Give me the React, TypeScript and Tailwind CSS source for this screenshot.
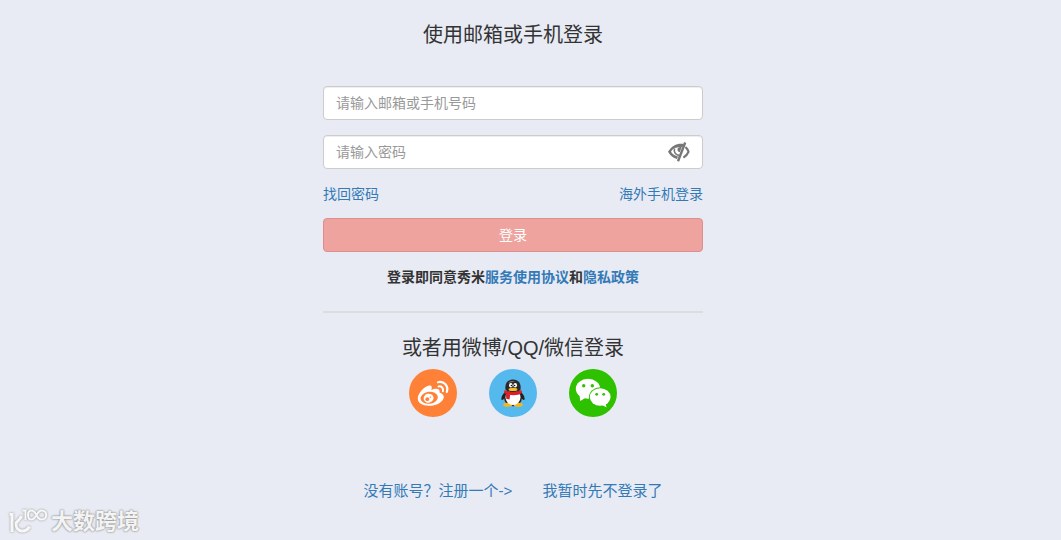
import { useState } from "react";

const linkClass = "text-[#337ab7] hover:underline";
const inputClass =
  "block h-[34px] w-full rounded border border-[#cccccc] bg-white px-3 text-sm text-[#555555] shadow-[inset_0_1px_1px_rgba(0,0,0,0.075)] outline-none placeholder:text-[#999999]";

function EyeOffIcon() {
  return (
    <svg width="22" height="20" viewBox="0 0 22 20" fill="none" stroke="#777777" aria-hidden="true">
      <path d="M16 2C10 .8 4 3 0 9.800 2.500 13.800 5 16 9 17L10 14.600C6.800 13.800 4.600 12.300 3 9.800 3.600 8.800 4.300 7.900 5.200 7.100 7 5.500 11 5 14.500 5Z" fill="#777777" stroke="none" />
      <path d="M6.500 6.500C5.600 10 7.500 13 11 13.400" strokeWidth="1.600" />
      <path d="M9.800 6C9 8.500 9.800 10 11.800 10.200L14 4Z" fill="#777777" stroke="none" />
      <path d="M17.200 .5 10 19.200" strokeWidth="2.400" />
      <path d="M17.500 5C19 6.300 19.900 7.800 20.500 9.800 19.500 12.300 17.900 14 15.400 15.600" strokeWidth="2.200" />
    </svg>
  );
}

function WeiboIcon() {
  return (
    <svg className="size-12" viewBox="0 0 48 48" aria-hidden="true">
      <circle cx="24" cy="24" r="24" fill="#ff8138" />
      <path d="M8.800 29.500C8.800 24.500 15 17.500 20 16.500 23 16 23.200 18.500 22.300 21 26 19.300 31.500 18.800 30.600 23.400 35.200 25 35.800 28.200 33.500 31.200 30.500 35 25.500 36.700 20 36.700 13 36.700 8.800 33.800 8.800 29.500Z" fill="#fff" />
      <ellipse cx="20.200" cy="28.800" rx="8.700" ry="6" fill="#ff8138" transform="rotate(-8 20.200 28.800)" />
      <ellipse cx="19.600" cy="29.200" rx="5" ry="4.500" fill="#fff" transform="rotate(-15 19.600 29.200)" />
      <circle cx="18.300" cy="30.200" r="1.900" fill="#ff8138" />
      <circle cx="21.300" cy="28.300" r=".7" fill="#ff8138" />
      <path d="M29.500 17.500C32.500 16.800 34.800 19.200 33.900 22.200" fill="none" stroke="#fff" strokeWidth="2" strokeLinecap="round" />
      <path d="M29 13.200C35 11.800 39.800 17 37.800 23" fill="none" stroke="#fff" strokeWidth="2.200" strokeLinecap="round" />
    </svg>
  );
}

function QQIcon() {
  return (
    <svg className="size-12" viewBox="0 0 48 48" aria-hidden="true">
      <circle cx="24" cy="24" r="24" fill="#56b9ee" />
      <path d="M17 22C13.500 25 12 28 12.500 30.500 13 32.200 15 30 16 28.500ZM31 22C34.500 25 36 28 35.500 30.500 35 32.200 33 30 32 28.500Z" fill="#222" />
      <ellipse cx="24" cy="28.500" rx="9" ry="8.800" fill="#222" />
      <ellipse cx="18.800" cy="35.800" rx="4.600" ry="2" fill="#f7b51c" />
      <ellipse cx="29.200" cy="35.800" rx="4.600" ry="2" fill="#f7b51c" />
      <ellipse cx="24" cy="28.500" rx="7.500" ry="7.400" fill="#fff" />
      <path d="M16.500 20.500C15.500 14 19 10.500 24 10.500S32.500 14 31.500 20.500C30 24 18 24 16.500 20.500Z" fill="#292929" />
      <path d="M19.500 14C20.500 12 23 11.800 26 12.200 24 13 21 13.500 19.500 14Z" fill="#777" />
      <ellipse cx="21.800" cy="16.200" rx="1.800" ry="2.300" fill="#fff" />
      <ellipse cx="26.200" cy="16.200" rx="1.800" ry="2.300" fill="#fff" />
      <circle cx="22.400" cy="16.500" r=".8" fill="#111" />
      <circle cx="25.600" cy="16.500" r=".8" fill="#111" />
      <path d="M15.500 21C20 23.500 28 23.500 32.500 21L33 24C28.500 26.800 21.500 27 15 24.200Z" fill="#d81f2a" />
      <path d="M17 24.500 21.200 25.500 20.500 30.500 17.200 29.800Z" fill="#d81f2a" />
      <ellipse cx="24" cy="20.400" rx="4.400" ry="1.700" fill="#fbbd20" />
    </svg>
  );
}

function WechatIcon() {
  return (
    <svg className="size-12" viewBox="0 0 48 48" aria-hidden="true">
      <circle cx="24" cy="24" r="24" fill="#2dc100" />
      <path d="M10.500 26 11.200 32 17 28.500Z" fill="#fff" />
      <ellipse cx="19" cy="19.800" rx="12.200" ry="10" fill="#fff" />
      <circle cx="14.700" cy="16.700" r="1.700" fill="#2dc100" />
      <circle cx="23.300" cy="16.700" r="1.700" fill="#2dc100" />
      <ellipse cx="31.200" cy="28" rx="11.300" ry="9.700" fill="#2dc100" />
      <ellipse cx="31.200" cy="28" rx="10.400" ry="8.800" fill="#fff" />
      <path d="M32.500 35.500 37.500 38.500 36.500 33.500Z" fill="#fff" />
      <circle cx="27.700" cy="25.300" r="1.400" fill="#2dc100" />
      <circle cx="34.700" cy="25.300" r="1.400" fill="#2dc100" />
    </svg>
  );
}

function Watermark() {
  return (
    <div className="absolute bottom-1 left-2 flex items-center gap-[3px] text-white/90">
      <svg
        width="40" height="28" viewBox="0 0 40 28" fill="none" stroke="currentColor" strokeWidth="3"
        className="drop-shadow-[0_0_1px_#888888]" aria-hidden="true"
      >
        <path d="M1.500 6.500H4V24" />
        <path d="M13.500 8C12.500 11 9.500 13 8 15 7.500 19.500 10 23 14 23 17.500 23 20 21.500 21.500 18.500" />
        <path d="M14.500 2.500H17.500V12" strokeWidth="2" />
        <path d="M28.500 7C26.500 3.500 24.800 2.500 23.500 2.500 18.800 2.500 18.800 11.500 23.500 11.500 25.500 11.500 27 9.500 28.500 7S31.500 2.500 33.500 2.500C39.800 2.500 39.800 11.500 33.500 11.500 31.500 11.500 30 10 28.500 7Z" strokeWidth="2" />
      </svg>
      <span className="text-[22px] leading-7 font-bold [text-shadow:0_0_2px_#888888,0_0_2px_#999999]">大数跨境</span>
    </div>
  );
}

export default function App() {
  const [showPassword, setShowPassword] = useState(false);
  return (
    <main className="relative min-h-screen bg-[#e8ebf3] pr-[35px] font-['Liberation_Sans','Noto_Sans_CJK_SC',sans-serif] text-sm text-[#333333]">
      <div className="mx-auto flex w-full max-w-[380px] flex-col pt-[21px]">
        <h1 className="text-center text-xl leading-7 font-normal">使用邮箱或手机登录</h1>
        <form className="mt-[37px] flex flex-col" onSubmit={(e) => e.preventDefault()}>
          <input aria-label="邮箱或手机号码" type="text" placeholder="请输入邮箱或手机号码" className={inputClass} />
          <div className="relative mt-[15px]">
            <input aria-label="密码" type={showPassword ? "text" : "password"} placeholder="请输入密码" className={inputClass} />
            <button
              type="button" aria-label="显示密码" onClick={() => setShowPassword(!showPassword)}
              className="absolute inset-y-0 right-[13px] flex items-center"
            >
              <EyeOffIcon />
            </button>
          </div>
          <div className="mt-[15px] flex justify-between leading-5">
            <a href="#recover" className={linkClass}>找回密码</a>
            <a href="#overseas" className={linkClass}>海外手机登录</a>
          </div>
          <button type="submit" className="mt-[14px] h-[34px] rounded border border-[#dc8f8e] bg-[#eea39e] text-sm text-white">
            登录
          </button>
        </form>
        <p className="mt-[15px] text-center leading-5 font-bold">
          登录即同意秀米<a href="#terms" className={linkClass}>服务使用协议</a>和<a href="#privacy" className={linkClass}>隐私政策</a>
        </p>
        <hr className="mt-6 border-t-2 border-[#dddddf]" />
        <h2 className="mt-[21px] text-center text-xl leading-7 font-normal">或者用微博/QQ/微信登录</h2>
        <div className="mt-[7px] flex justify-center gap-8">
          <a href="#weibo" aria-label="微博登录"><WeiboIcon /></a>
          <a href="#qq" aria-label="QQ登录"><QQIcon /></a>
          <a href="#wechat" aria-label="微信登录"><WechatIcon /></a>
        </div>
        <div className="mt-[62px] flex justify-center gap-[30px] text-[15px] leading-6">
          <a href="#register" className={linkClass}>没有账号？注册一个-&gt;</a>
          <a href="#skip" className={linkClass}>我暂时先不登录了</a>
        </div>
      </div>
      <Watermark />
    </main>
  );
}
